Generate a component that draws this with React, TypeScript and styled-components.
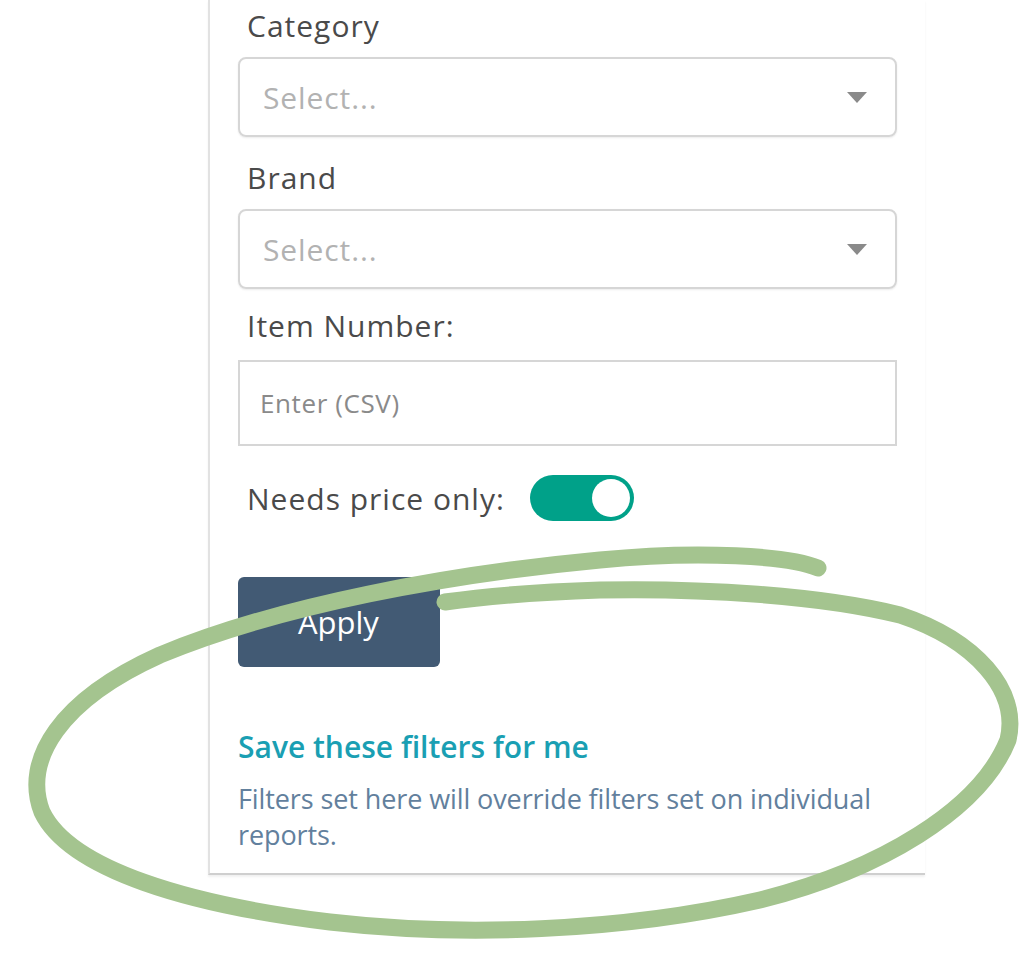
import { createGlobalStyle, styled } from 'styled-components'

const GlobalStyle = createGlobalStyle`
  html, body {
    margin: 0;
    padding: 0;
    background: #ffffff;
  }
  body {
    font-family: "Open Sans", Lato, "Liberation Sans", sans-serif;
  }
`

// @ NOTE Styled Component

const Page = styled.div`
  position: relative;
  width: 1024px;
  height: 971px;
  overflow: hidden;
  background: #ffffff;
`

const Panel = styled.div`
  margin-left: 208px;
  width: 717px;
  box-sizing: border-box;
  padding: 8px 28px 20px 28px;
  border-left: 2px solid #e2e2e2;
  border-bottom: 2px solid #cfcfcf;
  box-shadow: 0 2px 2px rgba(0, 0, 0, 0.06);
  display: flex;
  flex-direction: column;
`

const Label = styled.div<{ $top?: number }>`
  margin-top: ${(p) => p.$top ?? 0}px;
  padding-left: 9px;
  font-size: 30px;
  line-height: 36px;
  color: #4a4a4a;
  letter-spacing: 1px;
`

const SelectBox = styled.div`
  margin-top: 13px;
  height: 80px;
  box-sizing: border-box;
  border: 2px solid #d6d6d6;
  border-radius: 8px;
  display: flex;
  align-items: center;
  justify-content: space-between;
  padding: 0 28px 0 23px;
  box-shadow: 0 1px 2px rgba(0, 0, 0, 0.08);
`

const Placeholder = styled.span`
  font-size: 30px;
  color: #b2b2b2;
  letter-spacing: 0.9px;
`

const Caret = styled.span`
  width: 0;
  height: 0;
  border-left: 10px solid transparent;
  border-right: 10px solid transparent;
  border-top: 11px solid #8a8a8a;
`

const TextInput = styled.div`
  margin-top: 16px;
  height: 86px;
  box-sizing: border-box;
  border: 2px solid #d6d6d6;
  display: flex;
  align-items: center;
  padding-left: 20px;
  font-size: 26px;
  color: #8a8a8a;
  letter-spacing: 0.6px;
`

const ToggleRow = styled.div`
  margin-top: 29px;
  padding-left: 9px;
  display: flex;
  align-items: center;
  gap: 25px;
  height: 46px;
`

const ToggleLabel = styled.span`
  font-size: 30px;
  color: #4a4a4a;
  letter-spacing: 1px;
`

const Toggle = styled.div<{ $on?: boolean }>`
  width: 104px;
  height: 46px;
  border-radius: 23px;
  background: ${(p) => (p.$on ? '#00a189' : '#cccccc')};
  display: flex;
  align-items: center;
  justify-content: ${(p) => (p.$on ? 'flex-end' : 'flex-start')};
  padding: 0 4px;
  box-sizing: border-box;
`

const Knob = styled.div`
  width: 38px;
  height: 38px;
  border-radius: 50%;
  background: #ffffff;
`

const ApplyButton = styled.button`
  margin-top: 56px;
  width: 202px;
  height: 90px;
  border: none;
  border-radius: 6px;
  background: #425a74;
  color: #ffffff;
  font-family: "Open Sans", Lato, "Liberation Sans", sans-serif;
  font-size: 31px;
  text-align: left;
  padding-left: 60px;
`

const SaveLink = styled.div`
  margin-top: 62px;
  font-size: 30px;
  line-height: 36px;
  font-weight: 600;
  color: #1a9fb3;
  letter-spacing: 0px;
`

const Note = styled.div`
  margin-top: 16px;
  width: 659px;
  font-size: 27px;
  line-height: 36px;
  color: #62809d;
  letter-spacing: -0.1px;
`

const Scribble = styled.svg`
  position: absolute;
  left: 0;
  top: 0;
  pointer-events: none;
`

const App = () => {
  return (
    <>
      <GlobalStyle />
      <Page>
        <Panel>
          <Label>Category</Label>
          <SelectBox>
            <Placeholder>Select...</Placeholder>
            <Caret />
          </SelectBox>
          <Label $top={23}>Brand</Label>
          <SelectBox>
            <Placeholder>Select...</Placeholder>
            <Caret />
          </SelectBox>
          <Label $top={19}>Item Number:</Label>
          <TextInput>Enter (CSV)</TextInput>
          <ToggleRow>
            <ToggleLabel>Needs price only:</ToggleLabel>
            <Toggle $on>
              <Knob />
            </Toggle>
          </ToggleRow>
          <ApplyButton>Apply</ApplyButton>
          <SaveLink>Save these filters for me</SaveLink>
          <Note>
            Filters set here will override filters set on individual reports.
          </Note>
        </Panel>
        {/* hand drawn annotation */}
        <Scribble width="1024" height="971" viewBox="0 0 1024 971">
          <path
            d="M818 568 C 790 556, 700 550, 600 560 C 450 574, 280 605, 160 655 C 60 700, 22 760, 42 812 C 70 870, 190 905, 330 922 C 460 937, 620 932, 760 900 C 880 870, 980 810, 1008 740 C 1020 690, 975 640, 900 615 C 820 595, 700 588, 600 590 C 540 592, 480 597, 445 602"
            fill="none"
            stroke="#a4c48f"
            strokeWidth="17"
            strokeLinecap="round"
            strokeLinejoin="round"
          />
        </Scribble>
      </Page>
    </>
  )
}

export default App
